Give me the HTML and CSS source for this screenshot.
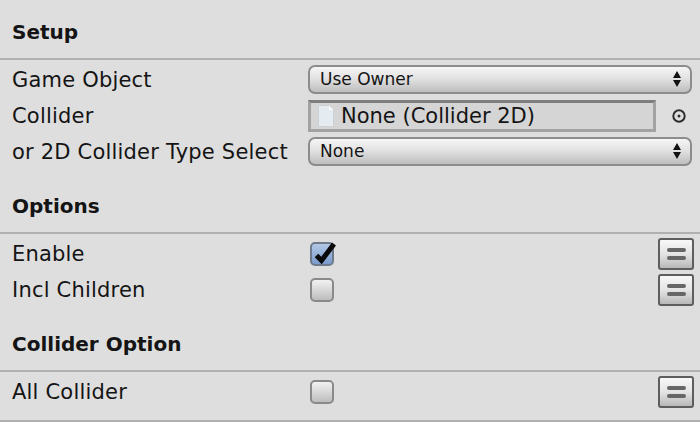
FILE: index.html
```html
<!DOCTYPE html>
<html lang="en">
  <head>
    <meta charset="UTF-8" />
    <title>Trigger 2D Event</title>
    <link rel="stylesheet" href="styles.css">
  </head>
  <body>
    <section class="group setup">
      <h2 class="group-title">Setup</h2>
      <div class="rows">
        <div class="row">
          <span class="label">Game Object</span>
          <div class="dropdown">
            <span>Use Owner</span>
            <svg class="stepper" width="10" height="18" viewBox="0 0 10 18"><path d="M5 1 9 8H1ZM5 17 1 10H9Z" /></svg>
          </div>
        </div>
        <div class="row">
          <span class="label">Collider</span>
          <div class="object-field">
            <svg class="file-icon" width="16" height="22" viewBox="0 0 16 22">
              <path d="M.5 1.500a1 1 0 0 1 1-1H11L15.500 5V20.500a1 1 0 0 1-1 1H1.500a1 1 0 0 1-1-1Z" fill="#e4ebf1" stroke="#ccd1d6" />
              <path d="M11 .5V5H15.500Z" fill="#f8f9fa" />
            </svg>
            <span>None (Collider 2D)</span>
          </div>
          <svg class="target" width="16" height="16" viewBox="0 0 16 16">
            <circle cx="8" cy="8" r="5.700" fill="none" stroke="#2e2e2e" stroke-width="2" />
            <circle cx="8" cy="8" r="1.500" fill="#2e2e2e" />
          </svg>
        </div>
        <div class="row">
          <span class="label">or 2D Collider Type Select</span>
          <div class="dropdown">
            <span>None</span>
            <svg class="stepper" width="10" height="18" viewBox="0 0 10 18"><path d="M5 1 9 8H1ZM5 17 1 10H9Z" /></svg>
          </div>
        </div>
      </div>
    </section>

    <section class="group">
      <h2 class="group-title">Options</h2>
      <div class="rows">
        <div class="row">
          <span class="label">Enable</span>
          <div class="checkbox checked">
            <svg class="tick" width="28" height="26" viewBox="0 0 28 26"><path d="M6.500 15.500 11.500 20.500 24 4" fill="none" stroke="#0a0a0a" stroke-width="5" /></svg>
          </div>
          <div class="menu-button"><i></i><i></i></div>
        </div>
        <div class="row">
          <span class="label">Incl Children</span>
          <div class="checkbox"></div>
          <div class="menu-button"><i></i><i></i></div>
        </div>
      </div>
    </section>

    <section class="group last">
      <h2 class="group-title">Collider Option</h2>
      <div class="rows">
        <div class="row">
          <span class="label">All Collider</span>
          <div class="checkbox"></div>
          <div class="menu-button"><i></i><i></i></div>
        </div>
      </div>
    </section>
  </body>
</html>
```

FILE: styles.css
```css
html,
body {
  margin: 0;
  height: 422px;
  overflow: hidden;
}
body {
  background-color: #dedede;
  color: #141414;
  font-family: "DejaVu Sans", sans-serif;
}
.group-title {
  margin: 0;
  padding: 23px 12px 13px;
  border-bottom: 2px solid #b0b0b0;
  font-size: 20px;
  line-height: 26px;
  font-weight: bold;
}
.setup .group-title {
  padding-top: 19px;
}
.rows {
  padding-top: 2px;
}
.setup .rows {
  padding-top: 1px;
  padding-bottom: 1px;
}
.last {
  padding-bottom: 10px;
  border-bottom: 2px solid #b0b0b0;
}
.row {
  display: flex;
  align-items: center;
  height: 36px;
  position: relative;
}
.label {
  width: 296px;
  flex: none;
  padding-left: 12px;
  font-size: 21px;
  letter-spacing: 0.2px;
}
.setup .label {
  padding-top: 2px;
}
.dropdown {
  display: flex;
  align-items: center;
  justify-content: space-between;
  width: 384px;
  height: 29px;
  padding: 0 8px 0 10px;
  box-sizing: border-box;
  border: 2px solid #8c8c8c;
  border-radius: 7px;
  background: linear-gradient(#f6f6f6, #e2e2e2 45%, #bebebe);
  font-size: 17px;
}
.stepper {
  fill: #111;
}
.object-field {
  display: flex;
  align-items: center;
  gap: 7px;
  width: 348px;
  height: 32px;
  margin-top: 2px;
  padding-left: 7px;
  box-sizing: border-box;
  border: 3px solid #a2a2a2;
  border-top-color: #7d7d7d;
  background-color: #d5d5d5;
  font-size: 21px;
}
.target {
  margin-left: 15px;
  margin-top: 1px;
}
.checkbox {
  position: relative;
  width: 24px;
  height: 24px;
  margin-left: 2px;
  box-sizing: border-box;
  border: 2px solid #8a8a8a;
  border-radius: 5px;
  background: linear-gradient(#f2f2f2, #bdbdbd);
}
.checked {
  border-color: #6f7a8a;
  background: linear-gradient(#b3c8e6, #7a9ccd);
}
.tick {
  position: absolute;
  left: -2px;
  top: -4px;
}
.menu-button {
  display: flex;
  flex-direction: column;
  justify-content: center;
  align-items: center;
  gap: 4px;
  width: 36px;
  height: 32px;
  margin-left: auto;
  margin-right: 6px;
  box-sizing: border-box;
  border: 2px solid #5e5e5e;
  border-radius: 3px;
  background: linear-gradient(#f8f8f8, #e4e4e4 50%, #b8b8b8);
}
.menu-button i {
  width: 19px;
  height: 4px;
  border-radius: 2px;
  background-color: #666;
}
```
